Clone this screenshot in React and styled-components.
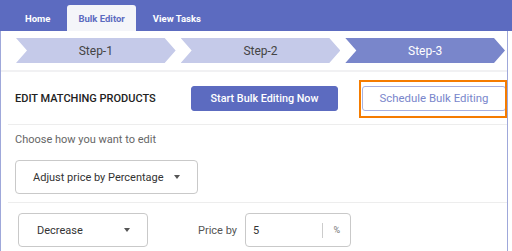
import React from 'react';
import styled, { createGlobalStyle } from 'styled-components';

const GlobalStyle = createGlobalStyle`
    body {
        margin: 0;
        background: #fff;
        font-family: Roboto, "Liberation Sans", sans-serif;
    }
`;

const Page = styled.div`
    width: 512px;
    height: 251px;
    overflow: hidden;
`;

const Header = styled.div`
    height: 31px;
    background: #5c6bc0;
    display: flex;
    align-items: flex-end;
    gap: 6px;
    padding-left: 14px;
`;

const Tab = styled.div`
    height: 26px;
    padding: 0 11px;
    display: flex;
    align-items: center;
    font-size: 9.5px;
    font-weight: 700;
    color: ${p => (p.active ? '#5c6bc0' : '#fff')};
    background: ${p => (p.active ? '#f4f5f9' : 'transparent')};
    border-radius: 3px 3px 0 0;
`;

const Panel = styled.div`
    width: 506px;
    border-left: 1px solid #9fa8da;
    border-right: 1px solid #9fa8da;
    background: #fff;
    height: 220px;
`;

const Steps = styled.div`
    display: grid;
    grid-template-columns: repeat(3, 1fr);
    gap: 5px;
    padding: 7px 2px 7px 15px;
    border-bottom: 2px solid #f1f1f3;
`;

const Step = styled.div`
    height: 25px;
    display: flex;
    align-items: center;
    justify-content: center;
    font-size: 12px;
    color: ${p => (p.active ? '#fff' : '#444')};
    background: ${p => (p.active ? '#7986cb' : '#c5cae9')};
    clip-path: polygon(0 0, calc(100% - 11px) 0, 100% 50%, calc(100% - 11px) 100%, 0 100%, 11px 50%);
`;

const Section = styled.div`
    margin-left: 7px;
    padding-left: 7px;
    border-bottom: 1px solid #ededed;
`;

const ActionRow = styled.div`
    display: flex;
    align-items: center;
    height: 52px;
`;

const Title = styled.div`
    font-size: 11px;
    font-weight: 500;
    color: #222;
    width: 176px;
`;

const Button = styled.div`
    position: relative;
    height: 25px;
    width: ${p => p.width}px;
    box-sizing: border-box;
    display: flex;
    align-items: center;
    justify-content: center;
    border-radius: 3px;
    font-size: ${p => (p.primary ? 10.8 : 11.4)}px;
    font-weight: ${p => (p.primary ? 500 : 400)};
    background: ${p => (p.primary ? '#5c6bc0' : '#fff')};
    color: ${p => (p.primary ? '#fff' : '#7986cb')};
    border: 1px solid ${p => (p.primary ? '#5c6bc0' : '#a9b1df')};
`;

const Highlight = styled.div`
    position: absolute;
    left: -4px;
    right: -2px;
    top: -7px;
    bottom: -8px;
    border: 2px solid #f57c00;
`;

const Hint = styled.div`
    font-size: 11px;
    color: #666;
    padding-top: 8px;
`;

const Select = styled.div`
    width: ${p => p.width}px;
    height: 34px;
    box-sizing: border-box;
    border: 1px solid #c9c9c9;
    border-radius: 4px;
    display: flex;
    align-items: center;
    justify-content: space-between;
    padding: 0 ${p => p.right}px 0 ${p => p.left}px;
    font-size: 11px;
    color: #333;
`;

const Caret = styled.span`
    width: 0;
    height: 0;
    border-left: 3.5px solid transparent;
    border-right: 3.5px solid transparent;
    border-top: 4px solid #555;
`;

const ChooseBlock = styled.div`
    padding: 14px 0 8px 0;
`;

const PriceRow = styled.div`
    display: flex;
    align-items: center;
    padding: 10px 0 0 17px;
`;

const Label = styled.span`
    font-size: 11px;
    color: #555;
    margin: 0 8px 0 50px;
`;

const Input = styled.div`
    width: 106px;
    height: 34px;
    box-sizing: border-box;
    border: 1px solid #c9c9c9;
    border-radius: 4px;
    display: flex;
    align-items: center;
    padding-left: 7px;
    font-size: 11px;
    color: #333;
`;

const Value = styled.span`
    flex: 1;
`;

const Unit = styled.span`
    border-left: 1px solid #ccc;
    height: 15px;
    display: flex;
    align-items: center;
    padding: 0 10px 0 10px;
    font-size: 9px;
    color: #777;
`;

export default function App() {
    return (
        <Page>
            <GlobalStyle />
            <Header>
                <Tab>Home</Tab>
                <Tab active>Bulk Editor</Tab>
                <Tab>View Tasks</Tab>
            </Header>
            <Panel>
                <Steps>
                    <Step>Step-1</Step>
                    <Step>Step-2</Step>
                    <Step active>Step-3</Step>
                </Steps>
                <Section>
                    <ActionRow>
                        <Title>EDIT MATCHING PRODUCTS</Title>
                        <Button primary width={147}>Start Bulk Editing Now</Button>
                        <Button width={144} style={{ marginLeft: 24 }}>
                            Schedule Bulk Editing
                            <Highlight />
                        </Button>
                    </ActionRow>
                </Section>
                <Section>
                    <Hint>Choose how you want to edit</Hint>
                    <ChooseBlock>
                        <Select width={183} left={17} right={17}>
                            Adjust price by Percentage
                            <Caret />
                        </Select>
                    </ChooseBlock>
                </Section>
                <PriceRow>
                    <Select width={130} left={18} right={17}>
                        Decrease
                        <Caret />
                    </Select>
                    <Label>Price by</Label>
                    <Input>
                        <Value>5</Value>
                        <Unit>%</Unit>
                    </Input>
                </PriceRow>
            </Panel>
        </Page>
    );
}
